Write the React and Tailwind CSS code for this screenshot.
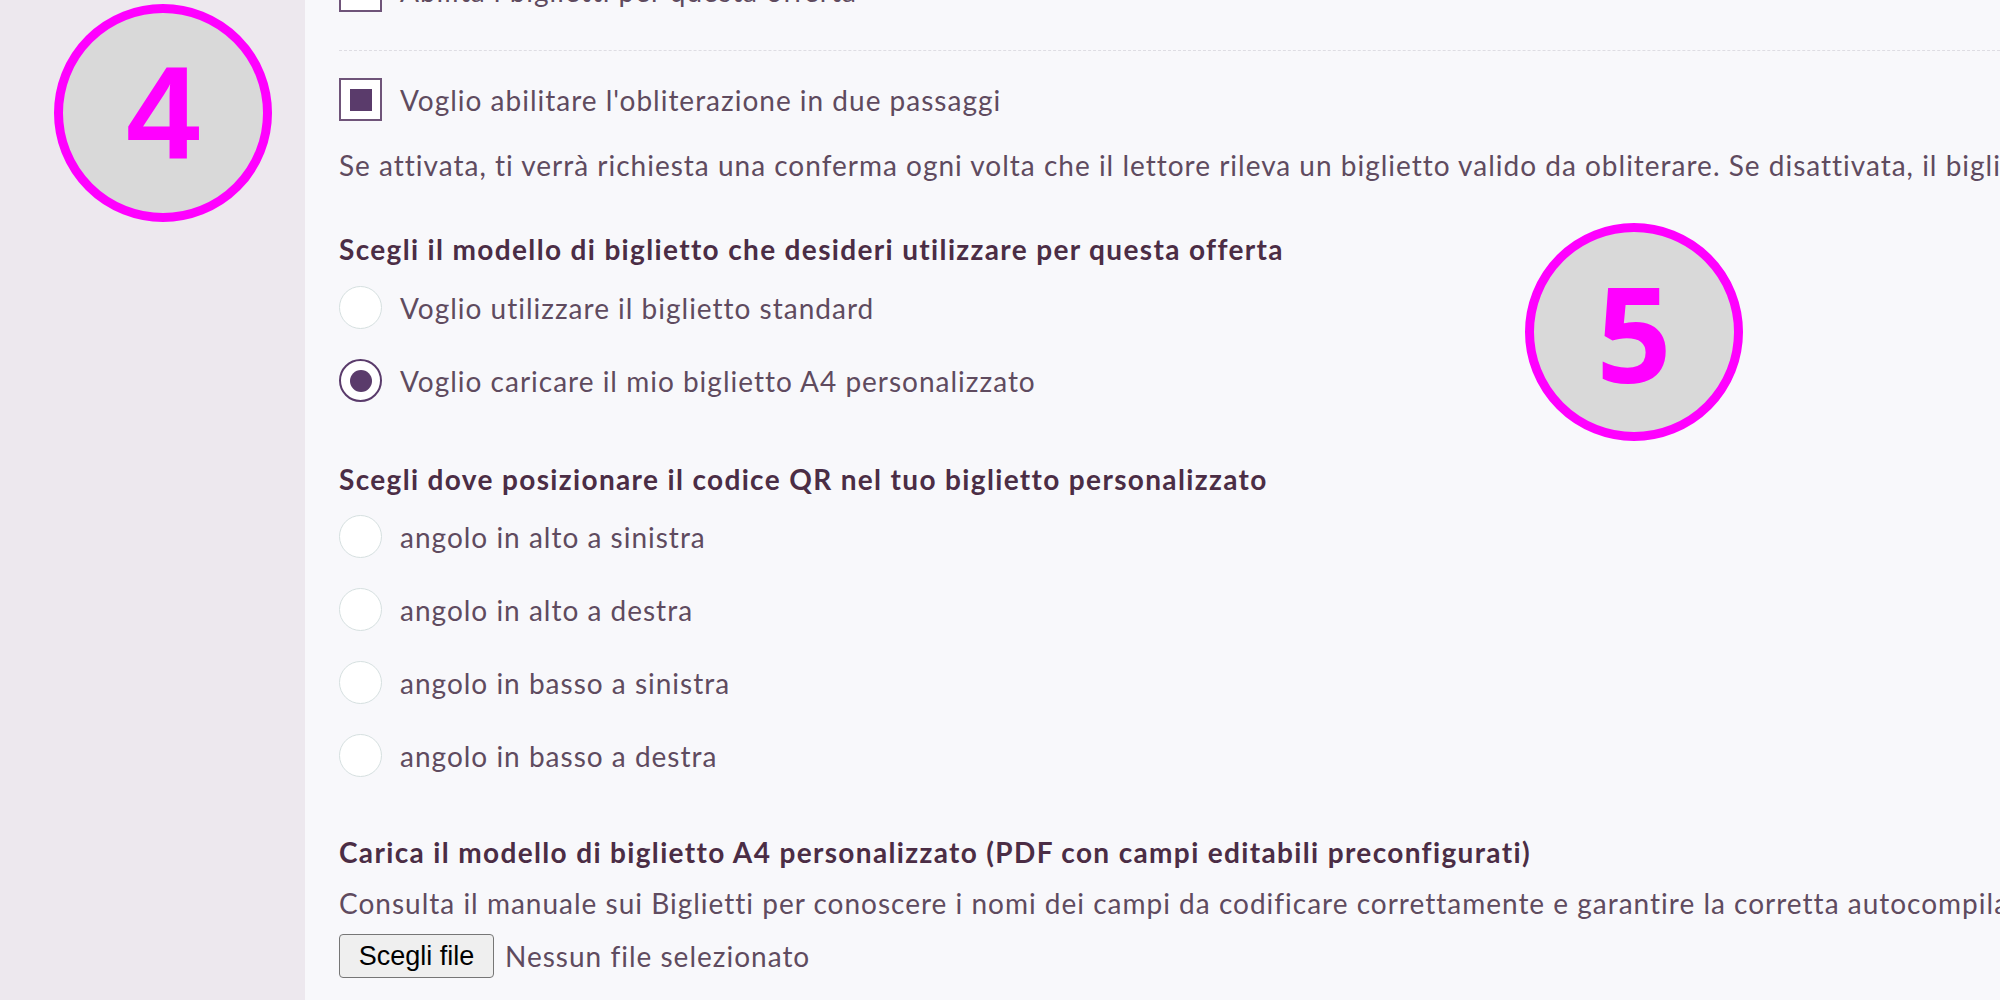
const bodyFont = { fontFamily: "Lato, 'Noto Sans', sans-serif" };

function Checkbox({ checked }) {
  return (
    <span className="flex h-[43px] w-[43px] shrink-0 items-center justify-center border-2 border-[#6f5479] bg-white">
      {checked && <span className="h-[22px] w-[22px] bg-[#5a3b6b]" />}
    </span>
  );
}

function Radio({ checked }) {
  return (
    <span
      className={
        checked
          ? "flex h-[43px] w-[43px] shrink-0 items-center justify-center rounded-full border-2 border-[#5a3b6b] bg-white"
          : "flex h-[43px] w-[43px] shrink-0 items-center justify-center rounded-full border border-[#d6e0e0] bg-white"
      }
    >
      {checked && <span className="h-[22px] w-[22px] rounded-full bg-[#5a3b6b]" />}
    </span>
  );
}

function Option({ checked, children, className = "" }) {
  return (
    <label className={"flex h-[43px] items-center gap-[18px] " + className}>
      <Radio checked={checked} />
      <span className="text-[28px] leading-[40px] tracking-[1px] text-[#5f4b5f]">{children}</span>
    </label>
  );
}

function Badge({ n, className, font }) {
  return (
    <div
      className={
        "absolute flex h-[218px] w-[218px] items-center justify-center rounded-full border-[9px] border-[#ff00ff] bg-[#d9d9d9] " +
        className
      }
    >
      <span className="text-[132px] font-bold leading-none text-[#ff00ff]" style={{ fontFamily: font }}>
        {n}
      </span>
    </div>
  );
}

export default function App() {
  return (
    <div className="relative flex h-[1000px] w-[2000px] overflow-hidden bg-[#f8f8fb]" style={bodyFont}>
      <aside className="w-[305px] shrink-0 bg-[#ede8ee]" />

      <main className="min-w-0 flex-1 whitespace-nowrap pl-[34px]">
        <div className="-mt-[31px] flex h-[43px] items-center gap-[18px]">
          <Checkbox />
          <span className="text-[28px] leading-[40px] tracking-[1px] text-[#5f4b5f]">Abilita i biglietti per questa offerta</span>
        </div>

        <div className="mt-[38px] border-t border-dashed border-[#dedde3]" />

        <label className="mt-[27px] flex h-[43px] items-center gap-[18px]">
          <Checkbox checked />
          <span className="text-[28px] leading-[40px] tracking-[1px] text-[#5f4b5f]">
            Voglio abilitare l'obliterazione in due passaggi
          </span>
        </label>

        <p className="mt-[24px] h-[40px] text-[28px] leading-[40px] tracking-[1px] text-[#5f4b5f]">
          Se attivata, ti verrà richiesta una conferma ogni volta che il lettore rileva un biglietto valido da obliterare. Se
          disattivata, il biglietto verrà obliterato automaticamente.
        </p>

        <h3 className="mt-[44px] h-[40px] text-[28px] font-bold leading-[40px] tracking-[1.35px] text-[#4b2d45]">
          Scegli il modello di biglietto che desideri utilizzare per questa offerta
        </h3>
        <Option className="mt-[17px]">Voglio utilizzare il biglietto standard</Option>
        <Option checked className="mt-[30px]">
          Voglio caricare il mio biglietto A4 personalizzato
        </Option>

        <h3 className="mt-[57px] h-[40px] text-[28px] font-bold leading-[40px] tracking-[1.35px] text-[#4b2d45]">
          Scegli dove posizionare il codice QR nel tuo biglietto personalizzato
        </h3>
        <Option className="mt-[16px]">angolo in alto a sinistra</Option>
        <Option className="mt-[30px]">angolo in alto a destra</Option>
        <Option className="mt-[30px]">angolo in basso a sinistra</Option>
        <Option className="mt-[30px]">angolo in basso a destra</Option>

        <h3 className="mt-[55px] h-[40px] text-[28px] font-bold leading-[40px] tracking-[1.35px] text-[#4b2d45]">
          Carica il modello di biglietto A4 personalizzato (PDF con campi editabili preconfigurati)
        </h3>
        <p className="mt-[11px] h-[40px] text-[28px] leading-[40px] tracking-[1px] text-[#5f4b5f]">
          Consulta il manuale sui Biglietti per conoscere i nomi dei campi da codificare correttamente e garantire la corretta
          autocompilazione dei biglietti.
        </p>
        <div className="mt-[11px] flex items-center gap-[11px]">
          <button
            className="h-[44px] w-[155px] rounded-[4px] border border-[#767676] bg-[#efefef] text-[27px] text-black"
            style={{ fontFamily: "'Liberation Sans', Arial, sans-serif" }}
          >
            Scegli file
          </button>
          <span className="text-[28px] leading-[40px] tracking-[1px] text-[#5f4b5f]">Nessun file selezionato</span>
        </div>
      </main>

      <Badge n="4" className="left-[54px] top-[4px]" font="'Liberation Sans', Arial, sans-serif" />
      <Badge n="5" className="left-[1525px] top-[223px]" font="'Open Sans', sans-serif" />
    </div>
  );
}
